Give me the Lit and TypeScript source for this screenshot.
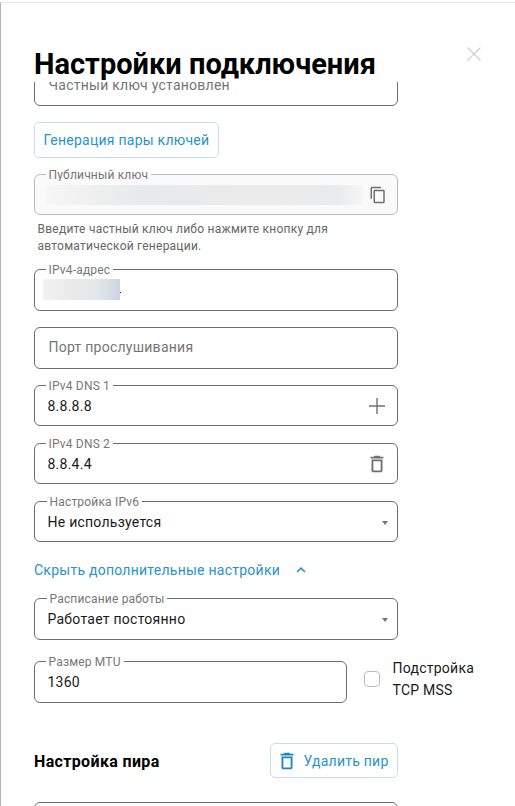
import { LitElement, html, css, svg } from "lit";
import { customElement } from "lit/decorators.js";

const copyIcon = svg`<path d="M16 1H4c-1.1 0-2 .9-2 2v14h2V3h12V1zm3 4H8c-1.1 0-2 .9-2 2v14c0 1.1.9 2 2 2h11c1.1 0 2-.9 2-2V7c0-1.1-.9-2-2-2zm0 16H8V7h11v14z"/>`;
const trashIcon = svg`<path d="M6 19c0 1.1.9 2 2 2h8c1.1 0 2-.9 2-2V7H6v12zM8 9h8v10H8V9zm7.5-5l-1-1h-5l-1 1H5v2h14V4z"/>`;

@customElement("app-root")
export class AppRoot extends LitElement {
  static styles = css`
    :host {
      display: block;
      width: 515px;
      height: 806px;
      overflow: hidden;
      background: #fff;
      font-family: Roboto, "Noto Sans", sans-serif;
      color: #111;
    }
    .modal {
      box-sizing: border-box;
      height: 806px;
      margin-top: 2px;
      border-top: 1px solid #e3e5ea;
      border-left: 1.5px solid #b4b4b4;
      padding-left: 32.5px;
      display: flex;
      flex-direction: column;
      overflow: hidden;
    }
    .head {
      flex: none;
      height: 79px;
      display: flex;
      align-items: flex-start;
      justify-content: space-between;
      padding-right: 33px;
    }
    h1 {
      margin: 44px 0 0;
      padding-left: 0.5px;
      font-size: 29px;
      line-height: 35px;
      font-weight: 700;
      color: #000;
      white-space: nowrap;
    }
    .close {
      margin-top: 43px;
      width: 16px;
      height: 16px;
      color: #d2d2d2;
    }
    .scroll {
      flex: 1;
      min-height: 0;
      overflow: hidden;
    }
    .body {
      width: 364px;
      margin-top: -18px;
      display: flex;
      flex-direction: column;
    }
    .field {
      position: relative;
      box-sizing: border-box;
      height: 42px;
      border: 1px solid #6e6e6e;
      border-radius: 6px;
      padding: 0 13px;
      display: flex;
      align-items: center;
      justify-content: space-between;
      font-size: 14px;
      letter-spacing: 0.25px;
      background: #fff;
      color: #1a1a1a;
    }
    .short { height: 41px; padding-top: 1px; }
    .lbl {
      position: absolute;
      top: -7px;
      left: 11px;
      padding: 0 3px;
      height: 13px;
      overflow: hidden;
      font-size: 12px;
      line-height: 14px;
      letter-spacing: 0.18px;
      background: #fff;
      color: #777;
    }
    .lbl.sel { left: 12px; }
    .muted { color: #757575; padding-left: 1px; }
    .port { padding-bottom: 2px; }
    .disabled {
      height: 41px;
      border-color: #bdbdbd;
      background: #fafafa;
    }
    .disabled .lbl {
      background: linear-gradient(#fff 7px, #fafafa 7px);
    }
    .blur {
      position: absolute;
      background: linear-gradient(90deg, #f6f6f6, #e8e9ea 30%, #ebebec 70%, #e9eaeb 92%, #f6f6f6);
    }
    .blur.pub { left: 10px; top: 10px; width: 318px; height: 20px; }
    .blur.ip {
      left: 8px;
      top: 9px;
      width: 77px;
      height: 21px;
      background: linear-gradient(90deg, #f2f2f2, #e8e8e8 45%, #e4e7ea 70%, #c9d5e2);
    }
    .dot {
      position: absolute;
      left: 85px;
      top: 22px;
      width: 1px;
      height: 1px;
      background: #222;
    }
    .icon {
      position: absolute;
      top: 50%;
      transform: translateY(-50%);
      fill: #6f6f6f;
    }
    .i-copy { right: 10px; width: 18px; height: 18px; }
    .i-plus { right: 8px; width: 24px; height: 24px; }
    .i-trash { right: 9px; width: 22px; height: 22px; }
    .caret {
      position: absolute;
      right: 9px;
      top: 19px;
      width: 0;
      height: 0;
      border-left: 3.5px solid transparent;
      border-right: 3.5px solid transparent;
      border-top: 4px solid #757575;
    }
    .btn {
      box-sizing: border-box;
      display: inline-flex;
      align-items: center;
      align-self: flex-start;
      border: 1px solid #c5dfed;
      border-radius: 5px;
      color: #2893c9;
      font-size: 14px;
      letter-spacing: 0.25px;
      background: #fff;
      white-space: nowrap;
    }
    .gen {
      margin-top: 16px;
      height: 36px;
      padding: 0 9px;
    }
    .help {
      margin: 6px 0 0 4px;
      font-size: 12px;
      line-height: 17px;
      letter-spacing: 0.24px;
      color: #666;
    }
    .toggle {
      margin-top: 19px;
      padding-left: 0.5px;
      height: 18px;
      display: flex;
      align-items: center;
      gap: 16px;
      font-size: 14px;
      letter-spacing: 0.25px;
      color: #2893c9;
    }
    .toggle svg { width: 10px; height: 6px; }
    .mtu-row {
      margin-top: 21px;
      display: flex;
      align-items: flex-start;
    }
    .mtu-row .field { width: 313px; flex: none; }
    .check {
      flex: none;
      box-sizing: border-box;
      width: 16px;
      height: 16px;
      margin: 10px 0 0 17px;
      border: 1px solid #b9b9b9;
      border-radius: 4px;
      background: #fff;
    }
    .cklabel {
      flex: none;
      margin: -4px -90px 0 13px;
      width: 90px;
      font-size: 14px;
      line-height: 22px;
      letter-spacing: 0.25px;
      color: #1a1a1a;
    }
    .peer {
      margin-top: 40px;
      height: 35px;
      display: flex;
      align-items: center;
      justify-content: space-between;
    }
    .peer b {
      padding: 1px 0 0 0.5px;
      font-size: 16px;
      letter-spacing: 0.35px;
      font-weight: 700;
      color: #000;
    }
    .del {
      height: 35px;
      width: 128px;
      padding: 0 8px 0 5px;
      gap: 6px;
    }
    .del svg { width: 22px; height: 22px; fill: #1a86c0; flex: none; }
    .mt16 { margin-top: 16px; }
    .mt14 { margin-top: 14px; }
    .mt17 { margin-top: 17px; }
    .mt19 { margin-top: 19px; }
    .mt24 { margin-top: 24px; }
  `;

  render() {
    return html`
      <div class="modal">
        <div class="head">
          <h1>Настройки подключения</h1>
          <svg class="close" viewBox="0 0 16 16" fill="none" stroke="currentColor" stroke-width="1.4">
            <path d="M1.5 1.5L14.5 14.5M14.5 1.5L1.5 14.5" />
          </svg>
        </div>
        <div class="scroll">
          <div class="body">
            <div class="field"><span class="muted">Частный ключ установлен</span></div>
            <div class="btn gen">Генерация пары ключей</div>
            <div class="field disabled mt16">
              <span class="lbl">Публичный ключ</span>
              <span class="blur pub"></span>
              <svg class="icon i-copy" viewBox="0 0 24 24">${copyIcon}</svg>
            </div>
            <div class="help">Введите частный ключ либо нажмите кнопку для<br />автоматической генерации.</div>
            <div class="field mt14">
              <span class="lbl">IPv4-адрес</span>
              <span class="blur ip"></span><span class="dot"></span>
            </div>
            <div class="field port mt16"><span class="muted">Порт прослушивания</span></div>
            <div class="field short mt16">
              <span class="lbl">IPv4 DNS 1</span>8.8.8.8
              <svg class="icon i-plus" viewBox="0 0 24 24"><path d="M11.3 4H12.7V11.3H20V12.7H12.7V20H11.3V12.7H4V11.3H11.3Z" /></svg>
            </div>
            <div class="field short mt17">
              <span class="lbl">IPv4 DNS 2</span>8.8.4.4
              <svg class="icon i-trash" viewBox="0 0 24 24">${trashIcon}</svg>
            </div>
            <div class="field short mt17">
              <span class="lbl sel">Настройка IPv6</span>Не используется<span class="caret"></span>
            </div>
            <div class="toggle">
              Скрыть дополнительные настройки
              <svg viewBox="0 0 10 6" fill="none" stroke="#2893c9" stroke-width="1.7"><path d="M1 5L5 1.2L9 5" /></svg>
            </div>
            <div class="field mt19">
              <span class="lbl sel">Расписание работы</span>Работает постоянно<span class="caret"></span>
            </div>
            <div class="mtu-row">
              <div class="field"><span class="lbl">Размер MTU</span>1360</div>
              <span class="check"></span>
              <span class="cklabel">Подстройка TCP&nbsp;MSS</span>
            </div>
            <div class="peer">
              <b>Настройка пира</b>
              <div class="btn del">
                <svg viewBox="0 0 24 24">${trashIcon}</svg>Удалить пир
              </div>
            </div>
            <div class="field mt24"></div>
          </div>
        </div>
      </div>
    `;
  }
}
